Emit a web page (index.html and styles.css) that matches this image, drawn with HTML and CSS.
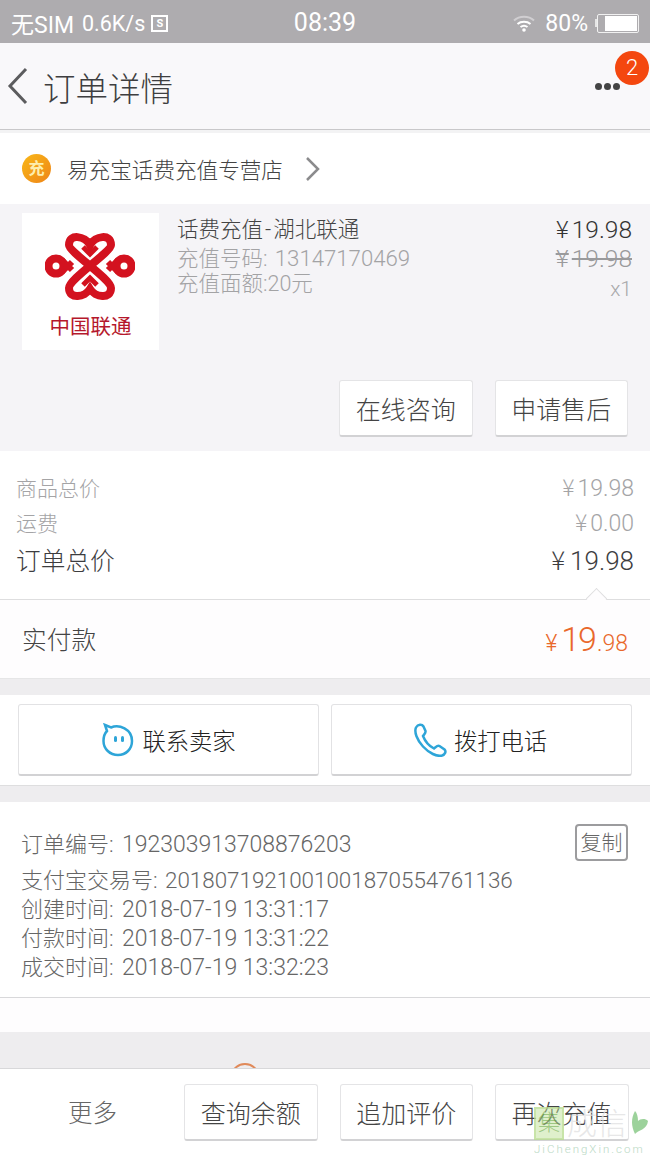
FILE: index.html
```html
<!DOCTYPE html>
<html>
<head>
  <title>订单详情</title>
  <link rel="stylesheet" href="styles.css">
</head>
<body>
  <div class="phone">

    <!-- status bar -->
    <div class="status-bar">
      <div class="status-left">
        <span class="sim">无SIM</span>
        <span class="speed">0.6K/s</span>
        <span class="s-box">S</span>
      </div>
      <div class="status-time">08:39</div>
      <div class="status-right">
        <svg class="wifi" width="22" height="18" viewBox="0 0 22 18">
          <path d="M1 6.500C6.500 1.500 15.500 1.500 21 6.500" fill="none" stroke="#d0ced1" stroke-width="2"/>
          <path d="M4.500 10C8 7 14 7 17.500 10" fill="none" stroke="#fff" stroke-width="2"/>
          <path d="M7.500 13C9.500 11.500 12.500 11.500 14.500 13" fill="none" stroke="#fff" stroke-width="2"/>
          <circle cx="11" cy="16" r="1.800" fill="#fff"/>
        </svg>
        <span class="battery-text">80%</span>
        <span class="battery-nub"></span>
        <span class="battery"><span class="battery-fill"></span></span>
      </div>
    </div>

    <!-- nav -->
    <div class="navbar">
      <svg class="back" width="24" height="38" viewBox="0 0 24 38">
        <path d="M20 2L4 19L20 36" fill="none" stroke="#5c5c5e" stroke-width="3"/>
      </svg>
      <h1 class="nav-title">订单详情</h1>
      <div class="dots"><i></i><i></i><i></i></div>
      <span class="badge">2</span>
    </div>

    <!-- shop -->
    <div class="shop-row">
      <span class="shop-icon">充</span>
      <span class="shop-name">易充宝话费充值专营店</span>
      <svg width="16" height="26" viewBox="0 0 16 26">
        <path d="M2 2L13 13L2 24" fill="none" stroke="#8b8b8d" stroke-width="2.500"/>
      </svg>
    </div>

    <!-- item -->
    <div class="item-block">
      <div class="item-row">
        <div class="item-logo">
          <svg class="knot" width="90" height="70" viewBox="0 0 90 70">
            <g fill="none" stroke="#d3121f" stroke-width="8">
              <path d="M45 13C40 4 24 1 24 13C24 20 66 47 66 56C66 68 50 65 45 57C40 65 24 68 24 56C24 47 66 20 66 13C66 1 50 4 45 13Z"/>
              <circle cx="11" cy="34" r="7.500"/>
              <circle cx="79" cy="34" r="7.500"/>
              <path d="M17 28L27 38M17 40L27 30M73 28L63 38M73 40L63 30" stroke-width="6"/>
              <path d="M38 15L45 22L52 15M38 53L45 46L52 53" stroke-width="5"/>
            </g>
          </svg>
          <span class="logo-text">中国联通</span>
        </div>
        <div class="item-info">
          <div class="item-title">话费充值<span class="dash">-</span>湖北联通</div>
          <div class="item-spec">充值号码: <span class="spec-num">13147170469</span></div>
          <div class="item-spec">充值面额:20元</div>
        </div>
        <div class="item-prices">
          <div class="price-now"><span class="yen">¥</span>19.98</div>
          <div class="price-old"><span class="yen">¥</span>19.98</div>
          <div class="price-qty">x1</div>
        </div>
      </div>
      <div class="item-actions">
        <span class="btn">在线咨询</span>
        <span class="btn">申请售后</span>
      </div>
    </div>

    <!-- totals -->
    <div class="totals">
      <div class="total-row muted"><span>商品总价</span><span class="amount"><span class="yen">¥</span>19.98</span></div>
      <div class="total-row muted"><span>运费</span><span class="amount"><span class="yen">¥</span>0.00</span></div>
      <div class="total-row strong"><span>订单总价</span><span class="amount"><span class="yen">¥</span>19.98</span></div>
      <span class="notch"></span>
    </div>

    <div class="paid-row">
      <span>实付款</span>
      <span class="paid-amount"><small>¥</small><b>19</b><small>.98</small></span>
    </div>

    <div class="gap"></div>

    <!-- contact -->
    <div class="contact">
      <div class="contact-btn">
        <svg width="34" height="34" viewBox="0 0 34 34">
          <path d="M4 2L10 4.500C18 1 31 6 31 18C31 26 25 32 17 32C9 32 2.500 26 2.500 18C2.500 13 4 10 6 8Z" fill="none" stroke="#2ea5d8" stroke-width="2.500"/>
          <rect x="13" y="13" width="3" height="6" rx="1.500" fill="#2ea5d8"/>
          <rect x="20" y="13" width="3" height="6" rx="1.500" fill="#2ea5d8"/>
        </svg>
        <span>联系卖家</span>
      </div>
      <div class="contact-btn phone-btn">
        <svg width="34" height="34" viewBox="0 0 34 34">
          <path d="M3 4.500C5 1 9 1 10.500 3.500L12.500 8C13 10 11 11.500 10 13C12 18 16 23 21 25.500C23 24 24.500 22 26.500 23L31.500 26.500C33.500 28.500 32 31.500 29 32.500C24 34 16 30 10 23.500C4 17 1 9 3 4.500Z" fill="none" stroke="#2ea5d8" stroke-width="2.500"/>
        </svg>
        <span>拨打电话</span>
      </div>
    </div>

    <div class="gap"></div>

    <!-- order info -->
    <div class="order-info">
      <div class="info-first">
        <span>订单编号: <span class="num">192303913708876203</span></span>
        <span class="copy-btn">复制</span>
      </div>
      <div class="info-line">支付宝交易号: <span class="num-long">2018071921001001870554761136</span></div>
      <div class="info-line">创建时间: <span class="num">2018-07-19 13:31:17</span></div>
      <div class="info-line">付款时间: <span class="num">2018-07-19 13:31:22</span></div>
      <div class="info-line">成交时间: <span class="num">2018-07-19 13:32:23</span></div>
    </div>

    <div class="blank"></div>
    <div class="gap-large"><span class="arc"></span></div>

    <!-- bottom bar -->
    <div class="bottom-bar">
      <span class="more">更多</span>
      <span class="btn">查询余额</span>
      <span class="btn">追加评价</span>
      <span class="btn">再次充值</span>
    </div>

    <!-- watermark -->
    <div class="watermark">
      <div class="wm-top">
        <span class="wm-box">集</span>
        <span class="wm-name">成信</span>
        <svg class="wm-leaf" width="20" height="28" viewBox="0 0 20 28">
          <path d="M5 1C1 8 1 16 5 24C8 20 17 20 18 11C15 8 10 9 8 11C8 7 7 3 5 1Z" fill="#7cc47a"/>
        </svg>
      </div>
      <div class="wm-url">JiChengXin.com</div>
    </div>

  </div>
</body>
</html>
```

FILE: styles.css
```css
* {
  box-sizing: border-box;
}

html, body {
  margin: 0;
  height: 100%;
}

body {
  font-family: Roboto, "Noto Sans CJK SC", sans-serif;
  font-weight: 300;
  color: #444;
  background-color: #fff;
}

.phone {
  position: relative;
  width: 650px;
  height: 1155px;
  overflow: hidden;
  display: flex;
  flex-direction: column;
}

.yen {
  font-family: "Noto Sans CJK SC", sans-serif;
  line-height: 1;
  margin-right: 3px;
}

/* status bar */
.status-bar {
  height: 43px;
  flex: none;
  display: grid;
  grid-template-columns: 1fr auto 1fr;
  align-items: center;
  padding: 0 11px;
  background-color: #aeacaf;
  color: #fff;
  font-size: 21.5px;
  font-weight: 400;
}

.status-left, .status-right {
  display: flex;
  align-items: center;
}

.status-right {
  justify-content: flex-end;
}

.sim {
  font-size: 23px;
  margin-right: 8px;
}

.speed {
  margin-right: 6px;
}

.s-box {
  width: 17px;
  height: 17px;
  border: 2px solid #fff;
  font-size: 11px;
  font-weight: 700;
  line-height: 13px;
  text-align: center;
}

.status-time {
  font-size: 25px;
  line-height: 46px;
}

.wifi {
  margin-right: 10px;
}

.battery-text {
  font-size: 23px;
}

.battery-nub {
  width: 2px;
  height: 8px;
  margin-left: 7px;
  background-color: #e6e6e6;
}

.battery {
  display: block;
  width: 42px;
  height: 19px;
  border: 1px solid #f1f1f1;
  border-radius: 2px;
  padding: 1px;
}

.battery-fill {
  display: block;
  width: 84%;
  height: 100%;
  margin-left: auto;
  background-color: #fff;
}

/* nav */
.navbar {
  height: 87px;
  flex: none;
  display: flex;
  align-items: center;
  padding: 0 30px 0 6px;
  background-color: #f9f8fa;
  border-bottom: 1px solid #c9c8ca;
  position: relative;
}

.back {
  margin-right: 14px;
}

.nav-title {
  margin: 0 0 0 -1px;
  font-size: 32.5px;
  font-weight: 300;
  flex: 1;
  color: #3e3e40;
}

.dots {
  display: flex;
  gap: 2px;
}

.dots i {
  width: 7px;
  height: 7px;
  border-radius: 50%;
  background-color: #444;
}

.badge {
  position: absolute;
  left: 615px;
  top: 8px;
  width: 34px;
  height: 34px;
  border-radius: 50%;
  background-color: #f4470f;
  color: #fff;
  font-size: 22px;
  line-height: 34px;
  text-align: center;
}

/* shop */
.shop-row {
  height: 74px;
  flex: none;
  display: flex;
  align-items: center;
  padding-left: 22px;
  border-top: 3px solid #f3f3f4;
}

.shop-icon {
  width: 29px;
  height: 29px;
  border-radius: 50%;
  background: linear-gradient(135deg, #f9b818, #ee8418);
  color: #fdeeb0;
  font-size: 16px;
  font-weight: 700;
  line-height: 29px;
  text-align: center;
  margin-right: 16px;
}

.shop-name {
  font-size: 21.6px;
  margin-right: 22px;
}

/* item */
.item-block {
  height: 247px;
  flex: none;
  padding: 9px 22px 14px;
  background-color: #f5f4f7;
  display: flex;
  flex-direction: column;
  justify-content: space-between;
}

.item-row {
  display: flex;
}

.item-logo {
  width: 137px;
  height: 137px;
  flex: none;
  background-color: #fff;
  display: flex;
  flex-direction: column;
  align-items: center;
  padding-top: 19px;
}

.knot {
  margin-right: 2px;
}

.logo-text {
  margin-top: 12px;
  color: #b5182c;
  font-size: 20.5px;
  font-weight: 400;
  line-height: 26px;
}

.item-info {
  flex: 1;
  margin-left: 19px;
  margin-top: 1px;
}

.item-title {
  font-size: 21.5px;
  line-height: 32px;
  height: 32px;
  color: #444;
  margin-left: -1px;
}

.dash {
  padding: 0 2px;
}

.item-spec {
  font-size: 21.5px;
  line-height: 25px;
  height: 25px;
  color: #a3a3a5;
  margin-left: -1px;
}

.spec-num {
  font-size: 22.2px;
  margin-left: 2px;
}

.item-prices {
  text-align: right;
  font-size: 24.5px;
  margin: 3px -4px 0 0;
}

.price-now {
  height: 27px;
  line-height: 27px;
  color: #333;
}

.price-old {
  height: 31px;
  line-height: 31px;
  color: #9a9a9c;
  text-decoration: line-through;
}

.price-qty {
  font-size: 21px;
  line-height: 30px;
  color: #a8a8aa;
}

.item-actions {
  display: flex;
  justify-content: flex-end;
  gap: 22px;
}

.btn {
  width: 133.5px;
  height: 57px;
  flex: none;
  display: flex;
  align-items: center;
  justify-content: center;
  background-color: #fff;
  border: 1px solid #e4e4e6;
  border-bottom: 2px solid #d2d2d4;
  border-radius: 3px;
  font-size: 25px;
  color: #444;
}

/* totals */
.totals {
  height: 149px;
  flex: none;
  padding: 20px 16px 0 16px;
  border-bottom: 1px solid #dededf;
  position: relative;
}

.total-row {
  display: flex;
  justify-content: space-between;
  align-items: baseline;
}

.muted {
  height: 35px;
  line-height: 35px;
  font-size: 21px;
  color: #a4a4a6;
}

.muted .amount {
  font-size: 23px;
}

.strong {
  height: 40px;
  line-height: 40px;
  font-size: 24.7px;
  color: #3d3d3f;
}

.strong .amount {
  font-size: 26px;
}

.strong .yen {
  margin-right: 5px;
}

.notch {
  position: absolute;
  left: 589px;
  bottom: -7px;
  width: 15px;
  height: 15px;
  background-color: #fefdfe;
  border-left: 1px solid #dededf;
  border-top: 1px solid #dededf;
  transform: rotate(45deg);
}

.paid-row {
  height: 79px;
  flex: none;
  display: flex;
  justify-content: space-between;
  align-items: center;
  padding: 0 22px 3px;
  background-color: #fefdfe;
  font-size: 24.7px;
  color: #444;
  border-bottom: 1px solid #e6e6e7;
}

.paid-amount {
  color: #e9682b;
  display: flex;
  align-items: baseline;
  margin-top: 2px;
}

.paid-amount small {
  font-size: 23px;
}

.paid-amount b {
  font-size: 34px;
  font-weight: 300;
  letter-spacing: -2px;
  margin: 0 2px 0 4px;
}

.gap {
  height: 16px;
  flex: none;
  background-color: #eeedef;
}

/* contact */
.contact {
  height: 91px;
  flex: none;
  display: grid;
  grid-template-columns: 301px 301px;
  gap: 12px;
  padding: 9px 0 9px 18px;
  border-bottom: 1px solid #dededf;
}

.contact-btn {
  display: flex;
  align-items: center;
  justify-content: center;
  gap: 7px;
  border: 1px solid #e2e2e4;
  border-bottom: 2px solid #d2d2d4;
  border-radius: 3px;
  font-size: 23.3px;
  color: #222;
}

.phone-btn {
  padding-right: 3px;
}

/* order info */
.order-info {
  height: 196px;
  flex: none;
  padding: 21px 22px 0 21px;
  border-bottom: 1px solid #d8d8da;
  font-size: 22px;
  color: #666;
}

.num {
  font-size: 23px;
  margin-left: 3px;
}

.num-long {
  font-size: 22.4px;
  margin-left: 2px;
}

.info-first {
  display: flex;
  justify-content: space-between;
  align-items: center;
  height: 38px;
  margin-bottom: 4px;
}

.info-line {
  height: 29px;
  line-height: 29px;
}

.info-first + .info-line {
  height: 30px;
  line-height: 30px;
}

.copy-btn {
  width: 53px;
  height: 37px;
  border: 2px solid #9c9c9e;
  border-radius: 4px;
  font-size: 21px;
  line-height: 35px;
  text-align: center;
  color: #666;
}

.blank {
  height: 34px;
  flex: none;
  background-color: #fefdfe;
}

.gap-large {
  height: 36px;
  flex: none;
  background-color: #eeedef;
  position: relative;
  overflow: hidden;
}

.arc {
  position: absolute;
  left: 230px;
  top: 31px;
  width: 30px;
  height: 30px;
  border: 2px solid #e08a5a;
  border-radius: 50%;
}

/* bottom bar */
.bottom-bar {
  height: 87px;
  flex: none;
  display: flex;
  align-items: flex-start;
  gap: 22px;
  padding-top: 15px;
  border-top: 1px solid #d8d8da;
  background-color: #fff;
}

.more {
  width: 162px;
  padding-left: 68px;
  line-height: 59px;
  font-size: 24.5px;
  color: #666;
}

/* watermark */
.watermark {
  position: absolute;
  left: 534px;
  top: 1107px;
  width: 116px;
  opacity: 0.75;
}

.wm-top {
  display: flex;
  align-items: center;
  height: 33px;
}

.wm-box {
  width: 30px;
  height: 33px;
  flex: none;
  background-color: rgba(190, 225, 150, 0.65);
  border: 2px solid #b6dc8c;
  color: #7db558;
  font-size: 22px;
  line-height: 28px;
  text-align: center;
}

.wm-name {
  width: 66px;
  flex: none;
  color: #dfdfe1;
  font-size: 30px;
  line-height: 33px;
  text-align: center;
  white-space: nowrap;
}

.wm-leaf {
  flex: none;
}

.wm-url {
  margin-top: 3px;
  color: #a3cdb0;
  font-size: 11.5px;
  line-height: 12px;
  letter-spacing: 2px;
  white-space: nowrap;
}
```
